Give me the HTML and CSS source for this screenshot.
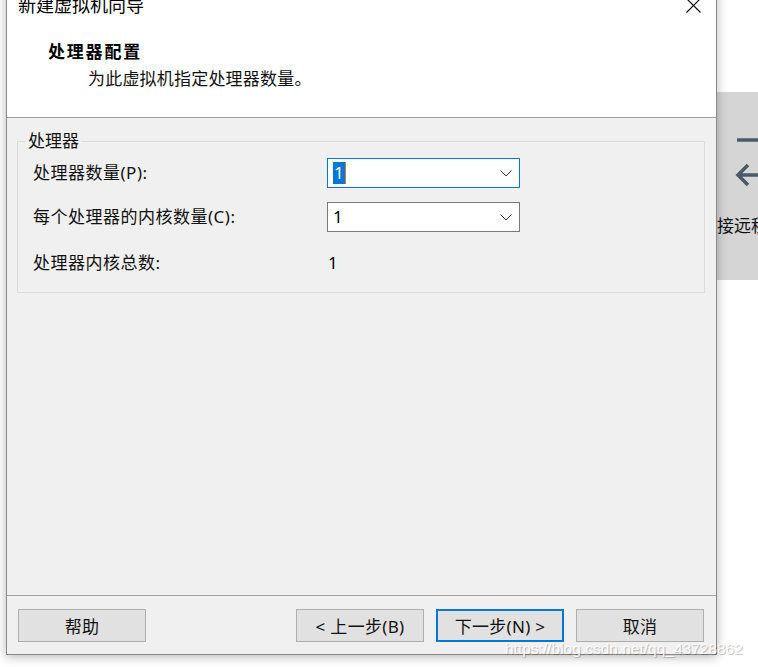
FILE: index.html
```html
<!DOCTYPE html>
<html lang="zh-CN">
<head>
<meta charset="utf-8">
<title>新建虚拟机向导</title>
<link rel="stylesheet" href="styles.css">
</head>
<body>
<div class="page">
  <div class="window">
    <div class="titlebar">
      <span class="title">新建虚拟机向导</span>
      <span class="close">
        <svg width="15" height="15" viewBox="0 0 15 15"><path d="M0.5 0.5 L14.5 14.5 M14.5 0.5 L0.5 14.5" stroke="#000" stroke-width="1.1" fill="none"/></svg>
      </span>
    </div>
    <div class="header">
      <div class="heading">处理器配置</div>
      <div class="subtitle">为此虚拟机指定处理器数量。</div>
    </div>
    <div class="content">
      <div class="group">
        <span class="legend">处理器</span>
        <div class="rows">
          <div class="label">处理器数量(P):</div>
          <div class="combo focused">
            <span class="value"><span class="sel">1</span></span>
            <svg class="chev" width="12" height="7" viewBox="0 0 12 7"><path d="M0.5 0.5 L6 6 L11.5 0.5" stroke="#333" stroke-width="1" fill="none"/></svg>
          </div>
          <div class="label">每个处理器的内核数量(C):</div>
          <div class="combo">
            <span class="value">1</span>
            <svg class="chev" width="12" height="7" viewBox="0 0 12 7"><path d="M0.5 0.5 L6 6 L11.5 0.5" stroke="#333" stroke-width="1" fill="none"/></svg>
          </div>
          <div class="label">处理器内核总数:</div>
          <div class="total">1</div>
        </div>
      </div>
    </div>
    <div class="footer">
      <button class="btn">帮助</button>
      <div class="spacer"></div>
      <button class="btn">&lt; 上一步(B)</button>
      <button class="btn primary">下一步(N) &gt;</button>
      <button class="btn">取消</button>
    </div>
  </div>
  <div class="side">
    <div class="side-top"></div>
    <div class="side-panel">
      <svg class="side-icon" width="24" height="60" viewBox="0 0 24 60"><path d="M3 10 H24" stroke="#4b5a69" stroke-width="3.5" fill="none"/><path d="M14 35 L4 45 L14 55 M4 45 H24" stroke="#4b5a69" stroke-width="3.5" fill="none"/></svg>
      <span class="side-text">接远程</span>
    </div>
  </div>
</div>
<div class="watermark">https://blog.csdn.net/qq_43728862</div>
</body>
</html>
```

FILE: styles.css
```css
* { box-sizing: border-box; }
html, body { margin: 0; padding: 0; }
body {
  background: #ffffff;
  width: 758px;
  height: 667px;
  overflow: hidden;
  position: relative;
  font-family: "Noto Sans", "Noto Sans CJK SC", sans-serif;
  font-size: 17px;
  color: #000;
}
.page {
  display: flex;
  align-items: flex-start;
  padding-left: 6px;
}
.window {
  width: 711px;
  margin-top: -12px;
  border: 1px solid #8a8a8a;
  border-top: none;
  background: #f0f0f0;
  box-shadow: 0 2px 10px rgba(0,0,0,0.28);
  position: relative;
  z-index: 1;
  display: flex;
  flex-direction: column;
}
.titlebar {
  height: 32px;
  background: #fff;
  display: flex;
  align-items: center;
  justify-content: space-between;
  padding-left: 11px;
}
.title {
  font-family: "Noto Sans CJK SC", sans-serif;
  font-size: 18px;
  line-height: 32px;
}
.close {
  width: 46px;
  height: 32px;
  display: flex;
  align-items: center;
  justify-content: center;
  padding-top: 3px;
}
.close svg { display: block; }
.header {
  background: #fff;
  padding: 19px 0 27px 41px;
  border-bottom: 1px solid #a0a0a0;
}
.heading {
  font-family: "Noto Sans CJK SC", sans-serif;
  font-weight: 700;
  font-size: 17px;
  letter-spacing: 1.8px;
  line-height: 24px;
}
.subtitle {
  font-family: "Noto Sans CJK SC", sans-serif;
  font-size: 17px;
  letter-spacing: 0.2px;
  line-height: 24px;
  margin-top: 3px;
  padding-left: 40px;
  color: #111;
}
.content {
  height: 478px;
  padding: 23px 11px 0 10px;
  border-bottom: 1px solid #a0a0a0;
}
.group {
  position: relative;
  border: 1px solid #dcdcdc;
  padding: 16px 0 12px 15px;
}
.legend {
  position: absolute;
  top: -13px;
  left: 8px;
  padding: 0 2px;
  background: #f0f0f0;
  line-height: 24px;
  font-size: 17px;
  color: #111;
}
.rows {
  display: grid;
  grid-template-columns: 294px 193px;
  grid-template-rows: 30px 30px 34px;
  row-gap: 14px;
  align-items: center;
}
.label {
  line-height: 24px;
  color: #111;
  letter-spacing: 0.5px;
}
.combo {
  height: 30px;
  background: #fff;
  border: 1px solid #7a7a7a;
  display: flex;
  align-items: center;
  justify-content: space-between;
  padding: 0 7px 0 5px;
}
.combo.focused { border-color: #0078d7; }
.value {
  font-size: 17px;
  line-height: 22px;
}
.sel {
  background: #0078d7;
  color: #fff;
  display: inline-block;
  padding: 0 1px;
  border-right: 1px solid #e07a1c;
}
.chev { display: block; }
.total {
  padding-left: 1px;
  line-height: 24px;
}
.footer {
  height: 58px;
  display: flex;
  align-items: flex-start;
  gap: 12px;
  padding: 13px 12px 0 11px;
}
.spacer { flex: 1; }
.btn {
  width: 128px;
  height: 33px;
  background: #e1e1e1;
  border: 1px solid #adadad;
  font-family: "Noto Sans", "Noto Sans CJK SC", sans-serif;
  font-size: 17px;
  color: #111;
  padding: 0;
  margin: 0;
  letter-spacing: 0.3px;
}
.btn.primary { border: 2px solid #0078d7; }
.side {
  flex: 1;
  display: flex;
  flex-direction: column;
  overflow: hidden;
}
.side-top {
  height: 92px;
  background: #ffffff;
}
.side-panel {
  height: 188px;
  background: #d5d5d5;
  position: relative;
  display: flex;
  flex-direction: column;
  align-items: flex-start;
  padding-top: 38px;
}
.side-icon {
  display: block;
  margin-left: 17px;
}
.side-text {
  font-family: "Noto Sans CJK SC", sans-serif;
  font-size: 17px;
  line-height: 24px;
  margin-top: 23px;
  white-space: nowrap;
  color: #111;
}
.watermark {
  position: absolute;
  left: 505px;
  top: 640px;
  font-family: "Liberation Sans", Arial, sans-serif;
  font-size: 15.5px;
  letter-spacing: 0;
  color: rgba(255,255,255,0.9);
  text-shadow: 1px 1px 1px rgba(0,0,0,0.25);
  z-index: 2;
}
```
